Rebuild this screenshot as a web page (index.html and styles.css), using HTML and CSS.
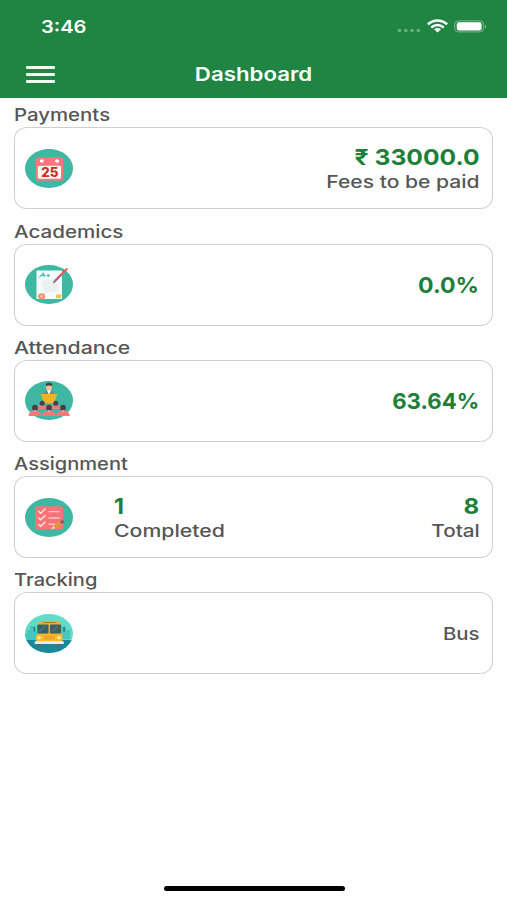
FILE: index.html
```html
<!DOCTYPE html>
<html lang="en">
<head>
  <meta charset="UTF-8">
  <meta name="viewport" content="width=device-width, initial-scale=1.0">
  <title>Dashboard</title>
  <link rel="stylesheet" href="styles.css">
</head>
<body>
  <header class="header">
    <div class="status-bar">
      <span class="time">3:46</span>
      <svg class="status-icons" width="92" height="16" viewBox="0 0 92 16">
        <g fill="#6bb17f">
          <circle cx="3.5" cy="11.5" r="1.8"/>
          <circle cx="9.8" cy="11.5" r="1.8"/>
          <circle cx="16" cy="11.5" r="1.8"/>
          <circle cx="22.3" cy="11.5" r="1.8"/>
        </g>
        <g fill="none" stroke="#fff" stroke-width="2.5">
          <path d="M31.8 5.2Q41.5 -2.2 51.2 5.2"/>
          <path d="M35.2 8.4Q41.5 3.7 47.8 8.4"/>
        </g>
        <path d="M38 10.3Q41.5 7.8 45 10.3L41.5 13.4Z" fill="#fff"/>
        <rect x="58.7" y="1.9" width="29" height="11" rx="3.6" fill="none" stroke="#79b88b"/>
        <rect x="60.8" y="3.2" width="24.8" height="8.4" rx="2" fill="#fff"/>
        <path d="M89 5.4Q91.6 7.4 89 9.4Z" fill="#79b88b"/>
      </svg>
    </div>
    <div class="nav-bar">
      <div class="menu"><i></i><i></i><i></i></div>
      <h1>Dashboard</h1>
    </div>
  </header>

  <main class="content">
    <section>
      <h2 class="payments">Payments</h2>
      <div class="card">
        <svg class="icon" viewBox="0 0 48 39">
          <ellipse cx="24" cy="19.5" rx="24" ry="19.5" fill="#3eb8a3"/>
          <rect x="10.8" y="8.3" width="27.2" height="23.4" rx="2.5" fill="#f9777c"/>
          <rect x="12.8" y="16.7" width="23.2" height="13" rx="1.4" fill="#fff7f1"/>
          <ellipse cx="16.8" cy="12" rx="2" ry="1.7" fill="#fff"/>
          <ellipse cx="32" cy="12" rx="2" ry="1.7" fill="#fff"/>
          <text x="16.3" y="27.8" font-size="12.5" font-weight="800" fill="#c72f23" textLength="17" lengthAdjust="spacingAndGlyphs">25</text>
        </svg>
        <div class="stat right">
          <strong class="fees">₹ 33000.0</strong>
          <span class="fees-label">Fees to be paid</span>
        </div>
      </div>
    </section>

    <section>
      <h2 class="academics">Academics</h2>
      <div class="card">
        <svg class="icon" viewBox="0 0 48 39">
          <ellipse cx="24" cy="19.5" rx="24" ry="19.5" fill="#3eb8a3"/>
          <path d="M11.5 5.5H37V34H11.5Z" fill="#f3fbfb"/>
          <path d="M16 17Q24 12 31 15L34 26L19 28Z" fill="#edf0f1"/>
          <path d="M14.3 12.5L18.3 8L19.5 12.2M15.5 10.8L20.5 10.4M21.5 10.5H25M23.2 8.8V12.2" fill="none" stroke="#45bdb5" stroke-width="1.1"/>
          <path d="M29.5 16.2L42.3 3.5" stroke="#ef6268" stroke-width="2.3"/>
          <path d="M28.4 17.9L36.2 10" stroke="#8c7077" stroke-width="1.5"/>
          <path d="M37 5.4L40.2 5.8" stroke="#d34b56" stroke-width="1"/>
          <ellipse cx="16.6" cy="31.3" rx="3.6" ry="3.1" fill="#f88f69"/>
          <ellipse cx="16.6" cy="31.3" rx="1.7" ry="1.4" fill="#ffc498"/>
          <path d="M31 29.5H36.5L35.5 33H31Z" fill="#e9c54a"/>
        </svg>
        <div class="stat right"><strong class="marks">0.0%</strong></div>
      </div>
    </section>

    <section>
      <h2 class="attendance">Attendance</h2>
      <div class="card">
        <svg class="icon" viewBox="0 0 48 39">
          <ellipse cx="24" cy="19.5" rx="24" ry="19.5" fill="#3eb8a3"/>
          <path d="M18 14Q19 9.5 24 9.5T30 14Z" fill="#668a9b"/>
          <path d="M22 9H26L24 14Z" fill="#fff"/>
          <ellipse cx="24" cy="6" rx="2.9" ry="3.4" fill="#f8c39c"/>
          <path d="M20.8 5Q20.5 1.8 24 1.8T27.2 5Q24 3.8 20.8 5Z" fill="#493e45"/>
          <path d="M15.7 13H32.3L30.8 17.5L28.5 22.5H19.7L17.3 17.5Z" fill="#f6b02c"/>
          <g fill="#f0787c">
            <path d="M10.5 28Q11 24.3 17.2 24.3T24 28Z"/>
            <path d="M24 28Q24.3 24.3 30.5 24.3T37 28Z"/>
            <path d="M3.5 35Q4 29.5 10 29.5T17 35Z"/>
            <path d="M17 35Q17.5 29.5 24 29.5T31 35Z"/>
            <path d="M31 35Q31.5 29.5 38 29.5T44.8 35Z"/>
          </g>
          <g fill="#494149">
            <ellipse cx="17.2" cy="22.3" rx="2.5" ry="2.5"/>
            <ellipse cx="30.8" cy="22.3" rx="2.5" ry="2.5"/>
            <ellipse cx="10" cy="26.8" rx="2.9" ry="3"/>
            <ellipse cx="24" cy="26.8" rx="2.9" ry="3"/>
            <ellipse cx="38" cy="26.8" rx="2.9" ry="3"/>
          </g>
          <path d="M8.9 29.2H11.1V31H8.9ZM22.9 29.2H25.1V31H22.9ZM36.9 29.2H39.1V31H36.9Z" fill="#e7ad95"/>
        </svg>
        <div class="stat right"><strong class="present">63.64%</strong></div>
      </div>
    </section>

    <section>
      <h2 class="assignment">Assignment</h2>
      <div class="card">
        <svg class="icon" viewBox="0 0 48 39">
          <ellipse cx="24" cy="19.5" rx="24" ry="19.5" fill="#3eb8a3"/>
          <rect x="10" y="8.2" width="28" height="23.3" rx="2" fill="#fb7378"/>
          <path d="M13.3 13L15.6 15.2L20.5 10.8M13.3 19.5L15.6 21.7L20.5 17.3M13.3 26L15.6 28.2L20.5 23.8" fill="none" stroke="#ffe6e4" stroke-width="1.5"/>
          <path d="M23.5 13.6H34.5M23.5 20H34.5M23.5 26.2H30" stroke="#ffc6c7" stroke-width="1.4"/>
          <path d="M29.3 28.7L36 24.6" stroke="#e29a37" stroke-width="3.6"/>
          <path d="M35.6 24.9L38.5 22.9" stroke="#7d5a50" stroke-width="2.8"/>
          <path d="M26 31.4L28.3 27.2L30.2 30.2Z" fill="#f8d6ab"/>
        </svg>
        <div class="stat done">
          <strong class="one">1</strong>
          <span class="done-label">Completed</span>
        </div>
        <div class="stat right">
          <strong class="eight">8</strong>
          <span class="total-label">Total</span>
        </div>
      </div>
    </section>

    <section>
      <h2 class="tracking">Tracking</h2>
      <div class="card">
        <svg class="icon" viewBox="0 0 48 39">
          <clipPath id="round"><ellipse cx="24" cy="19.5" rx="24" ry="19.5"/></clipPath>
          <g clip-path="url(#round)">
            <path d="M0 0H48V39H0Z" fill="#61dccb"/>
            <path d="M2 20V16H5V12H9V18H12V26H0V20ZM37 25V13H41V16H45V25Z" fill="#46c7bb"/>
            <path d="M0 26H48V39H0Z" fill="#19899a"/>
          </g>
          <path d="M12 12Q12 7 19 6.7H30Q36.5 7 36.5 12V29H12Z" fill="#f7ae25"/>
          <path d="M18 8.5H30.5" stroke="#b97526" stroke-width="1"/>
          <rect x="12.3" y="10.5" width="11.2" height="9" rx="1" fill="#356267"/>
          <rect x="25" y="10.5" width="11.2" height="9" rx="1" fill="#356267"/>
          <path d="M14.2 18L20 12M27 18L33 12" stroke="#41757a" stroke-width="1.8"/>
          <rect x="8.6" y="12.5" width="1.8" height="5.5" rx=".9" fill="#2f8088"/>
          <rect x="38.2" y="12.5" width="1.8" height="5.5" rx=".9" fill="#2f8088"/>
          <rect x="11" y="20.8" width="26.5" height="6.7" rx="1.4" fill="#fdbb2c"/>
          <path d="M19 22.8H29.5M19 24.8H29.5" stroke="#d8902b" stroke-width=".9"/>
          <ellipse cx="14.3" cy="23.7" rx="1.8" ry="1.5" fill="#ffedb2"/>
          <ellipse cx="34.2" cy="23.7" rx="1.8" ry="1.5" fill="#ffedb2"/>
          <rect x="9.5" y="27.2" width="29.5" height="2.7" rx="1.2" fill="#e7eef0"/>
          <path d="M12.5 30H17V32H12.5ZM31.5 30H36V32H31.5Z" fill="#5a6475"/>
        </svg>
        <div class="stat right"><span class="bus-label">Bus</span></div>
      </div>
    </section>
  </main>

  <div class="home-indicator"></div>
</body>
</html>
```

FILE: styles.css
```css
:root {
  --green: #208543;
  --value-green: #1c8039;
  --text-color: #565656;
  --border-color: #cfcfcf;
}
* {
  box-sizing: border-box;
}
body {
  margin: 0;
  height: 900px;
  display: flex;
  flex-direction: column;
  background-color: #fff;
  color: var(--text-color);
  font-family: 'Inter', Arial, sans-serif;
  overflow: hidden;
}
.header {
  height: 98.3px;
  background-color: var(--green);
  color: #fff;
}
.status-bar {
  display: flex;
  justify-content: space-between;
  align-items: center;
  height: 52px;
  padding: 0 19px 0 41px;
}
.time {
  font-size: 17.5px;
  font-weight: 600;
  transform: scaleX(1.15);
  transform-origin: left;
}
.status-icons {
  margin-top: 2px;
}
.nav-bar {
  display: grid;
  grid-template-columns: 55px 1fr 55px;
  align-items: center;
  height: 45px;
}
.menu {
  display: flex;
  flex-direction: column;
  gap: 4.7px;
  width: 29.5px;
  margin-left: 25.5px;
}
.menu i {
  height: 2.6px;
  background-color: #f0faf2;
  border-radius: 1px;
}
h1 {
  margin: 0;
  font-size: 19px;
  font-weight: 600;
  text-align: center;
  transform: scaleX(1.17);
}
.content {
  padding: 5px 14px 0;
}
section {
  margin-bottom: 10.3px;
}
h2, strong, span {
  white-space: nowrap;
}
/* wide lettering, each line stretched from its own edge */
h2 {
  width: max-content;
  margin: 0;
  font-size: 17px;
  font-weight: 550;
  line-height: 24px;
  transform: scaleX(var(--wide, 1.2));
  transform-origin: left;
}
.card {
  display: flex;
  align-items: center;
  height: 82px;
  padding: 0 12.5px 0 10px;
  border: 1px solid var(--border-color);
  border-radius: 13px / 12px;
}
.icon {
  width: 48px;
  height: 39px;
}
.stat {
  display: flex;
  flex-direction: column;
  align-items: flex-start;
  padding-top: 2px;
}
.stat strong, .stat span {
  transform: scaleX(var(--wide, 1.2));
  transform-origin: left;
}
.stat strong {
  color: var(--value-green);
  font-size: 22px;
  font-weight: 700;
  line-height: 25px;
}
.stat span {
  font-size: 17px;
  font-weight: 550;
  line-height: 24px;
}
.done {
  margin-left: 41px;
}
.right {
  align-items: flex-end;
  margin-left: auto;
}
.right strong, .right span {
  transform-origin: right;
}
.academics {
  --wide: 1.21;
}
.attendance {
  --wide: 1.25;
}
.assignment, .tracking {
  --wide: 1.18;
}
.fees {
  --wide: 1.12;
}
.fees-label {
  --wide: 1.24;
}
.marks {
  --wide: 1.05;
}
.present {
  --wide: 1.01;
}
.one {
  --wide: 1.05;
}
.eight {
  --wide: 1.1;
}
.done-label {
  --wide: 1.25;
}
.total-label {
  --wide: 1.22;
}
.home-indicator {
  width: 181px;
  height: 5.5px;
  margin: auto auto 9px 163.5px;
  background-color: #000;
  border-radius: 3px;
}
```
